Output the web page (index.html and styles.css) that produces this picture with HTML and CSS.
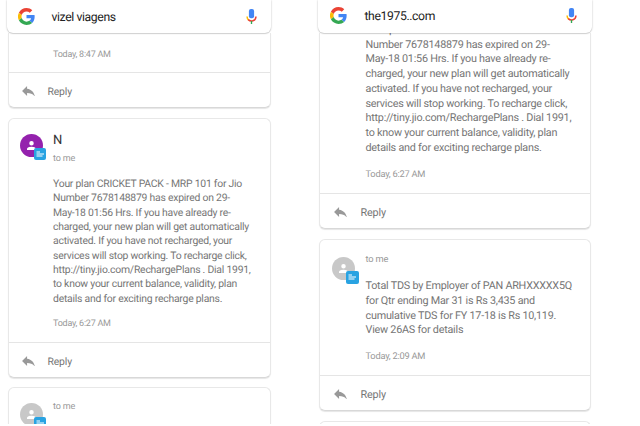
FILE: index.html
```html
<!DOCTYPE html>
<html lang="en">
<head>
<meta charset="utf-8">
<title>Messages</title>
<link rel="stylesheet" href="styles.css">
</head>
<body>
<svg class="sprite" aria-hidden="true">
  <symbol id="google" viewBox="2 2 44 44">
    <path fill="#ea4335" d="M24 11c3.300 0 6.200 1.100 8.500 3.300l6.400-6.400C35 4.200 30 2 24 2 15.400 2 8 7 4.300 14.100l7.400 5.800C13.500 14.700 18.300 11 24 11z"/>
    <path fill="#4285f4" d="M45.100 24.500c0-1.500-.100-3-.400-4.400H24v8.500h11.900c-.500 2.700-2 5-4.400 6.600l7.100 5.600c4.200-3.900 6.500-9.600 6.500-16.300z"/>
    <path fill="#fbbc05" d="M11.700 28.100a13.500 13.500 0 0 1 0-8.200l-7.400-5.800a22 22 0 0 0 0 19.800z"/>
    <path fill="#34a853" d="M24 46c6 0 11-2 14.600-5.200l-7.100-5.600c-2 1.300-4.500 2.100-7.500 2.100-5.700 0-10.500-3.900-12.300-9.200l-7.400 5.800C8 41 15.400 46 24 46z"/>
  </symbol>
  <symbol id="mic" viewBox="4 1 16 22">
    <rect x="8.200" y="1" width="7.600" height="13.500" rx="3" fill="#4285f4"/>
    <path fill="none" stroke="#fbbc05" stroke-width="2.200" d="M5.500 12c0 2.300.900 4 2.400 5.200"/>
    <path fill="none" stroke="#ea4335" stroke-width="2.200" d="M7.200 16.600C10.600 20 18.500 19 18.500 12"/>
    <path fill="#34a853" d="M11 18.500h2V23h-2z"/>
  </symbol>
  <symbol id="reply" viewBox="3 5 18 14">
    <path d="M10 9V5l-7 7 7 7v-4.100c5 0 8.500 1.600 11 5.100-1-5-4-10-11-11z"/>
  </symbol>
  <symbol id="person" viewBox="4 4 16 16">
    <path d="M12 12a4 4 0 1 0 0-8 4 4 0 0 0 0 8zm0 2c-2.700 0-8 1.300-8 4v2h16v-2c0-2.700-5.300-4-8-4z"/>
  </symbol>
  <symbol id="note" viewBox="0 0 12 12">
    <path fill="none" stroke="#fff" stroke-width="1.100" d="M2.500 4h3.500M2.500 6h7.500M2.500 8h6"/>
  </symbol>
</svg>

<main class="screens">
  <section class="screen screen-left">
    <header class="search">
      <svg class="logo"><use href="#google"/></svg>
      <span class="query">vizel viagens</span>
      <svg class="mic"><use href="#mic"/></svg>
    </header>
    <article class="card card-top">
      <div class="content"><p class="time">Today, 8:47 AM</p></div>
      <footer class="reply"><svg><use href="#reply"/></svg><span>Reply</span></footer>
    </article>
    <article class="card card-full">
      <div class="avatar purple"><svg class="person"><use href="#person"/></svg><span class="badge"><svg><use href="#note"/></svg></span></div>
      <div class="content">
        <h2>N</h2>
        <p class="to">to me</p>
        <p class="message">Your plan CRICKET PACK - MRP 101 for Jio<br>Number 7678148879 has expired on 29-<br>May-18 01:56 Hrs. If you have already re-<br>charged, your new plan will get automatically<br>activated. If you have not recharged, your<br>services will stop working. To recharge click,<br>http://tiny.jio.com/RechargePlans . Dial 1991,<br>to know your current balance, validity, plan<br>details and for exciting recharge plans.</p>
        <p class="time">Today, 6:27 AM</p>
      </div>
      <footer class="reply"><svg><use href="#reply"/></svg><span>Reply</span></footer>
    </article>
    <article class="card card-next">
      <div class="avatar"><svg class="person"><use href="#person"/></svg><span class="badge"><svg><use href="#note"/></svg></span></div>
      <div class="content"><p class="to">to me</p></div>
    </article>
  </section>

  <section class="screen screen-right">
    <header class="search">
      <svg class="logo"><use href="#google"/></svg>
      <span class="query">the1975..com</span>
      <svg class="mic"><use href="#mic"/></svg>
    </header>
    <article class="card card-top">
      <div class="content">
        <p class="message">Your plan CRICKET PACK - MRP 101 for Jio<br>Number 7678148879 has expired on 29-<br>May-18 01:56 Hrs. If you have already re-<br>charged, your new plan will get automatically<br>activated. If you have not recharged, your<br>services will stop working. To recharge click,<br>http://tiny.jio.com/RechargePlans . Dial 1991,<br>to know your current balance, validity, plan<br>details and for exciting recharge plans.</p>
        <p class="time">Today, 6:27 AM</p>
      </div>
      <footer class="reply"><svg><use href="#reply"/></svg><span>Reply</span></footer>
    </article>
    <article class="card card-full">
      <div class="avatar"><svg class="person"><use href="#person"/></svg><span class="badge"><svg><use href="#note"/></svg></span></div>
      <div class="content">
        <p class="to">to me</p>
        <p class="message">Total TDS by Employer of PAN ARHXXXXX5Q<br>for Qtr ending Mar 31 is Rs 3,435 and<br>cumulative TDS for FY 17-18 is Rs 10,119.<br>View 26AS for details</p>
        <p class="time">Today, 2:09 AM</p>
      </div>
      <footer class="reply"><svg><use href="#reply"/></svg><span>Reply</span></footer>
    </article>
    <article class="card card-next"></article>
  </section>
</main>
</body>
</html>
```

FILE: styles.css
```css
* { box-sizing: border-box; }
body { margin: 0; background: #fff; font-family: Roboto, "Liberation Sans", sans-serif; text-rendering: geometricPrecision; }
h2, p { margin: 0; font-weight: 400; white-space: nowrap; }
svg { display: block; flex: none; }
.sprite { position: absolute; width: 0; height: 0; }

.screens { display: flex; height: 424px; overflow: hidden; }
.screen { flex: none; height: 424px; overflow: hidden; }
.screen-left { width: 312px; padding-left: 7px; --line: 14.35px; --size: 10.4px; --small: 9px; --pad: 44.5px; }
.screen-right { width: 328px; padding-left: 6px; --line: 14.8px; --size: 10.8px; --small: 9.3px; --pad: 45.5px; }

.search {
  position: relative;
  z-index: 1;
  display: flex;
  align-items: center;
  height: 33px;
  border-radius: 0 0 6px 6px;
  background: #fff;
  box-shadow: 0 0 2px rgba(0, 0, 0, .25), 0 1px 1px rgba(0, 0, 0, .12);
}
.screen-left .search { width: 264px; padding-left: 11px; }
.screen-right .search { width: 274px; padding-left: 12px; }
.logo { width: 17px; height: 17px; }
.query { flex: 1; margin-left: 16.5px; color: #222; font-size: 12.2px; letter-spacing: -.38px; white-space: nowrap; }
.mic { width: 11px; height: 15px; margin-right: 14px; }
.screen-right .mic { margin-right: 15.5px; }
.screen-right .query { margin-left: 17.5px; }
.screen-right .search > * { margin-top: -2px; }

.card {
  display: grid;
  grid-template-columns: var(--pad) minmax(0, 1fr);
  grid-template-rows: 1fr auto;
  margin-bottom: 10px;
  border: 1px solid #e8e8e8;
  border-bottom-color: #d8d8d8;
  border-radius: 6px;
  background: #fff;
  box-shadow: 0 1px 1px rgba(0, 0, 0, .1);
}
.screen-left .card { width: 263px; margin-left: .5px; }
.screen-right .card { width: 272px; margin-left: 1px; }
.card-top { border-top: 0; border-radius: 0 0 6px 6px; }
.content { grid-column: 2; }

h2 { height: 22px; color: #333; font-size: 13px; line-height: 22px; }
.to { height: 14px; color: #999; font-size: var(--small); letter-spacing: -.15px; line-height: 14px; }
.message { color: #757575; font-size: var(--size); letter-spacing: -.23px; line-height: var(--line); }
.time { height: 14px; color: #999; font-size: var(--small); letter-spacing: -.24px; line-height: 14px; }

.reply {
  grid-column: 1 / 3;
  display: flex;
  align-items: center;
  gap: 13px;
  height: 35px;
  padding-left: 13px;
  border-top: 1px solid #e5e5e5;
  color: #757575;
  font-size: var(--size);
  letter-spacing: -.15px;
}
.reply > * { margin-top: 2px; }
.reply svg { width: 13px; height: 10px; fill: #999; }
.screen-right .reply { gap: 14px; padding-left: 13.5px; }

.avatar {
  position: relative;
  grid-column: 1;
  grid-row: 1;
  width: 23px;
  height: 23px;
  margin-left: 11px;
  padding: 7px 0 0 7px;
  border-radius: 50%;
  background: #c8c8c8;
}
.avatar.purple { background: #9421ad; }
.person { width: 9px; height: 9px; fill: #fff; }
.badge {
  position: absolute;
  left: 14px;
  top: 14px;
  width: 12px;
  height: 12px;
  border-radius: 2px;
  background: #29a3e2;
}
.screen-right .badge { width: 13px; height: 13px; }
.badge svg { width: 12px; height: 12px; }

.screen-left .card-top { height: 75px; }
.screen-left .card-top .content { padding-top: 15px; }
.screen-left .card-full { height: 260px; margin-bottom: 9px; }
.screen-left .card-full .content { padding-top: 11px; }
.screen-left .card-full .avatar { margin-top: 15px; }
.screen-left .card-full .message { margin: 11px 0 11px; }
.screen-left .card-next { height: 80px; }
.screen-left .card-next .content { padding-top: 12px; }
.screen-left .card-next .avatar { margin-top: 15px; }

.screen-right .card-top { height: 196px; }
.screen-right .card-top .content { height: 160px; padding-top: 0; }
.screen-right .card-top .message { margin: -10.300px 0 12px; }
.screen-right .card-full { height: 172px; }
.screen-right .card-full .content { padding-top: 13px; }
.screen-right .card-full .avatar { margin-top: 16.500px; margin-left: 11.500px; }
.screen-right .card-full .message { margin: 12px 0; }
.screen-right .card-next { height: 40px; }
```
